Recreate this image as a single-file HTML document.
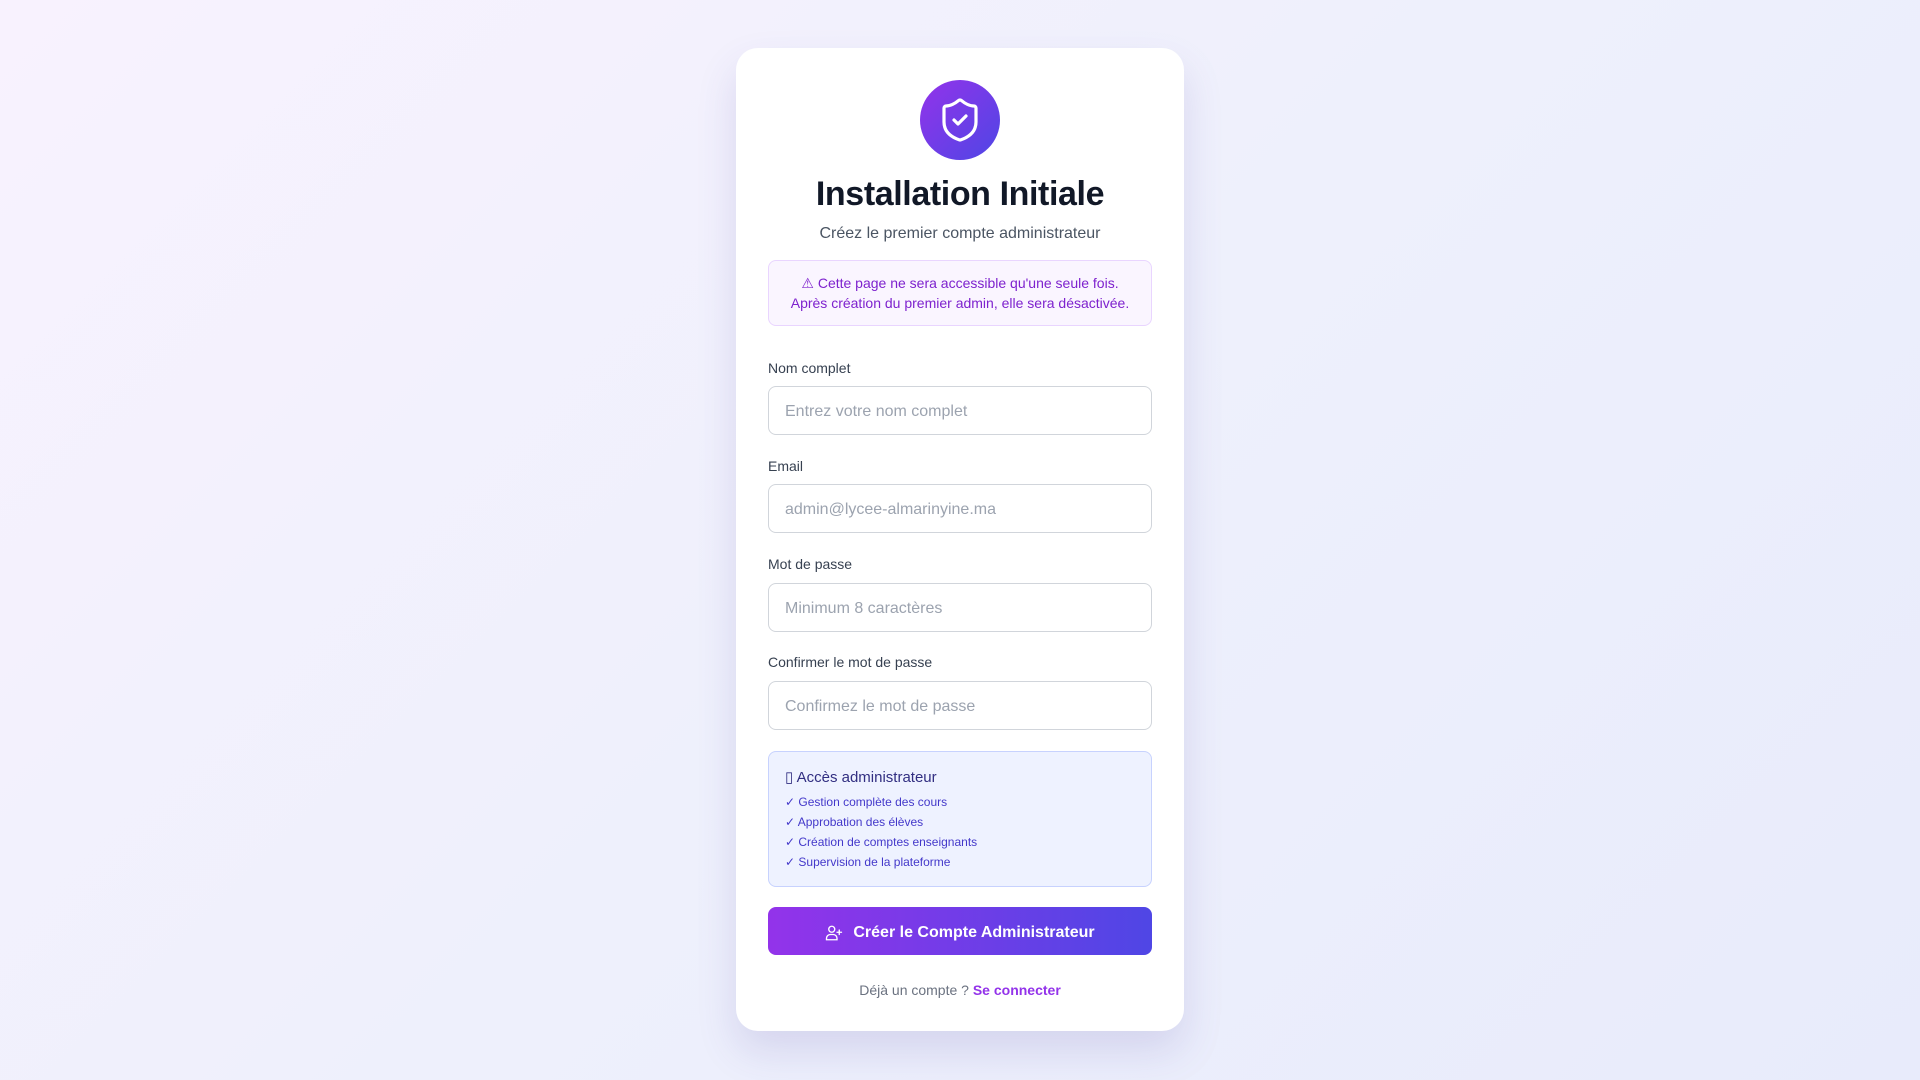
<!DOCTYPE html>
<html><head><meta charset="utf-8"><style>
*{box-sizing:border-box;margin:0;padding:0}
body{width:1920px;height:1080px;font-family:"Liberation Sans",sans-serif;background:linear-gradient(135deg,#f8f2fe 0%,#eef0fc 50%,#e8ebfb 100%);position:relative;overflow:hidden}
.card{position:absolute;left:736px;top:48px;width:448px;height:983px;background:#fff;border-radius:22px;box-shadow:0 20px 40px rgba(80,70,160,.15)}
.logo{position:absolute;left:184px;top:32px;width:80px;height:80px;border-radius:50%;background:linear-gradient(135deg,#9333ea,#4f46e5);display:flex;align-items:center;justify-content:center}
h1{position:absolute;top:127px;width:100%;text-align:center;font-size:34px;font-weight:bold;color:#111827;letter-spacing:-0.4px}
.sub{position:absolute;top:177px;width:100%;text-align:center;font-size:16px;color:#4b5563}
.warn{position:absolute;left:32px;top:212px;width:384px;height:66px;background:#faf5ff;border:1px solid #e9d5ff;border-radius:8px;color:#7e22ce;font-size:14px;text-align:center;line-height:20px;padding-top:12px}
.lbl{position:absolute;left:32px;font-size:14px;color:#374151}
.inp{position:absolute;left:32px;width:384px;height:49px;border:1px solid #d1d5db;border-radius:8px;font-size:16px;color:#9ca3af;padding:0 16px;line-height:49px}
.acc{position:absolute;left:32px;top:703px;width:384px;height:136px;background:#eef2ff;border:1px solid #c7d2fe;border-radius:8px;padding:16px 16px;color:#3730a3}
.acc b{display:block;font-size:15px;font-weight:normal;color:#312e81;margin-bottom:6px}
.acc div{font-size:12px;line-height:20px;color:#4338ca}
.btn{position:absolute;left:32px;top:859px;width:384px;height:48px;border-radius:8px;background:linear-gradient(90deg,#9333ea,#4f46e5);color:#fff;font-weight:bold;font-size:16px;display:flex;align-items:center;justify-content:center;gap:10px;padding-top:3px}
.foot{position:absolute;top:934px;width:100%;text-align:center;font-size:14px;color:#6b7280}
.foot b{color:#9333ea}
</style></head><body>
<div class="card">
<div class="logo"><svg width="48" height="48" viewBox="0 0 24 24" fill="none" stroke="#fff" stroke-width="1.6" stroke-linecap="round" stroke-linejoin="round"><path d="M20 13c0 5-3.5 7.5-7.66 8.95a1 1 0 0 1-.67-.01C7.5 20.5 4 18 4 13V6a1 1 0 0 1 1-1c2 0 4.5-1.2 6.24-2.72a1.17 1.170 0 0 1 1.52 0C14.51 3.81 17 5 19 5a1 1 0 0 1 1 1z"/><path d="m9 12 2 2 4-4"/></svg></div>
<h1>Installation Initiale</h1>
<div class="sub">Créez le premier compte administrateur</div>
<div class="warn">⚠ Cette page ne sera accessible qu'une seule fois.<br>Après création du premier admin, elle sera désactivée.</div>
<div class="lbl" style="top:312px">Nom complet</div>
<div class="inp" style="top:338px">Entrez votre nom complet</div>
<div class="lbl" style="top:410px">Email</div>
<div class="inp" style="top:436px">admin@lycee-almarinyine.ma</div>
<div class="lbl" style="top:508px">Mot de passe</div>
<div class="inp" style="top:535px">Minimum 8 caractères</div>
<div class="lbl" style="top:606px">Confirmer le mot de passe</div>
<div class="inp" style="top:633px">Confirmez le mot de passe</div>
<div class="acc"><b>▯ Accès administrateur</b>
<div>✓ Gestion complète des cours</div><div>✓ Approbation des élèves</div><div>✓ Création de comptes enseignants</div><div>✓ Supervision de la plateforme</div></div>
<div class="btn"><svg width="18" height="18" viewBox="0 0 24 24" fill="none" stroke="#fff" stroke-width="1.8" stroke-linecap="round"><circle cx="9" cy="7" r="4"/><path d="M2 21v-2a5 5 0 0 1 5-5h4a5 5 0 0 1 5 5v2z"/><path d="M19 8v6M16 11h6"/></svg>Créer le Compte Administrateur</div>
<div class="foot">Déjà un compte ? <b>Se connecter</b></div>
</div>
</body></html>
